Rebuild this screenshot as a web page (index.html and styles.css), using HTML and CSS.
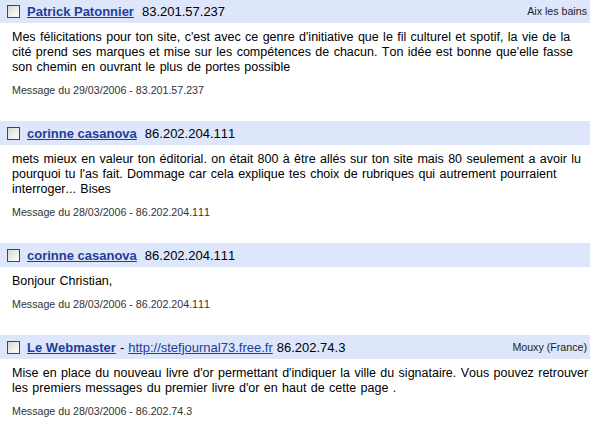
FILE: index.html
```html
<!DOCTYPE html>
<html lang="fr">
<head>
<meta charset="UTF-8">
<title>Livre d'or</title>
<link rel="stylesheet" href="styles.css">
</head>
<body>

<div class="guestbook">
    <div class="entry">
        <div class="entry-head">
            <span class="check"></span>
            <a class="author" href="#">Patrick Patonnier</a>
            <span class="ip">83.201.57.237</span>
            <span class="town">Aix les bains</span>
        </div>
        <p class="entry-text">Mes félicitations pour ton site, c'est avec ce genre d'initiative que le fil culturel et spotif, la vie de la cité prend ses marques et mise sur les compétences de chacun. Ton idée est bonne que'elle fasse son chemin en ouvrant le plus de portes possible</p>
        <div class="entry-meta">Message du 29/03/2006 - 83.201.57.237</div>
    </div>

    <div class="entry">
        <div class="entry-head">
            <span class="check"></span>
            <a class="author" href="#">corinne casanova</a>
            <span class="ip">86.202.204.111</span>
        </div>
        <p class="entry-text">mets mieux en valeur ton éditorial. on était 800 à être allés sur ton site mais 80 seulement a avoir lu pourquoi tu l'as fait. Dommage car cela explique tes choix de rubriques qui autrement pourraient interroger... Bises</p>
        <div class="entry-meta">Message du 28/03/2006 - 86.202.204.111</div>
    </div>

    <div class="entry">
        <div class="entry-head">
            <span class="check"></span>
            <a class="author" href="#">corinne casanova</a>
            <span class="ip">86.202.204.111</span>
        </div>
        <p class="entry-text">Bonjour Christian,</p>
        <div class="entry-meta">Message du 28/03/2006 - 86.202.204.111</div>
    </div>

    <div class="entry">
        <div class="entry-head">
            <span class="check"></span>
            <a class="author" href="#">Le Webmaster</a>
            <span class="sep">-</span>
            <a class="site" href="#">http://stefjournal73.free.fr</a>
            <span class="ip">86.202.74.3</span>
            <span class="town">Mouxy (France)</span>
        </div>
        <p class="entry-text">Mise en place du nouveau livre d'or permettant d'indiquer la ville du signataire. Vous pouvez retrouver les premiers messages du premier livre d'or en haut de cette page .</p>
        <div class="entry-meta">Message du 28/03/2006 - 86.202.74.3</div>
    </div>
</div>

</body>
</html>
```

FILE: styles.css
```css
body {
    margin: 0;
    font-family: "Liberation Sans", Arial, sans-serif;
    font-kerning: none;
    color: #000;
    background-color: #fff;
}
.guestbook {
    margin-top: -1px;
}
.entry {
    margin-bottom: 24px;
}
.entry-head {
    display: flex;
    align-items: center;
    height: 24px;
    padding: 0 3px 0 7px;
    background-color: #dde6fa;
    font-size: 13px;
}
.check {
    width: 11px;
    height: 11px;
    border: 1px solid #2b4a74;
    background: linear-gradient(135deg, #d8d8d2, #ffffff);
}
.author {
    margin-left: 7px;
    font-weight: bold;
    color: #1f3d99;
}
.site {
    color: #1f3d99;
}
.sep {
    margin: 0 4px;
}
.ip {
    margin-left: 8px;
}
.site + .ip {
    margin-left: 4px;
}
.town {
    margin-left: auto;
    align-self: flex-start;
    margin-top: 6px;
    font-size: 8pt;
    color: #222;
}
.entry-text {
    margin: 0;
    padding: 7px 0 0 12px;
    font-size: 12.5px;
    word-spacing: 0.9px;
    line-height: 15px;
}
.entry-meta {
    margin-top: 9px;
    padding-left: 12px;
    font-size: 8pt;
    line-height: 13px;
    color: #333;
}
```
